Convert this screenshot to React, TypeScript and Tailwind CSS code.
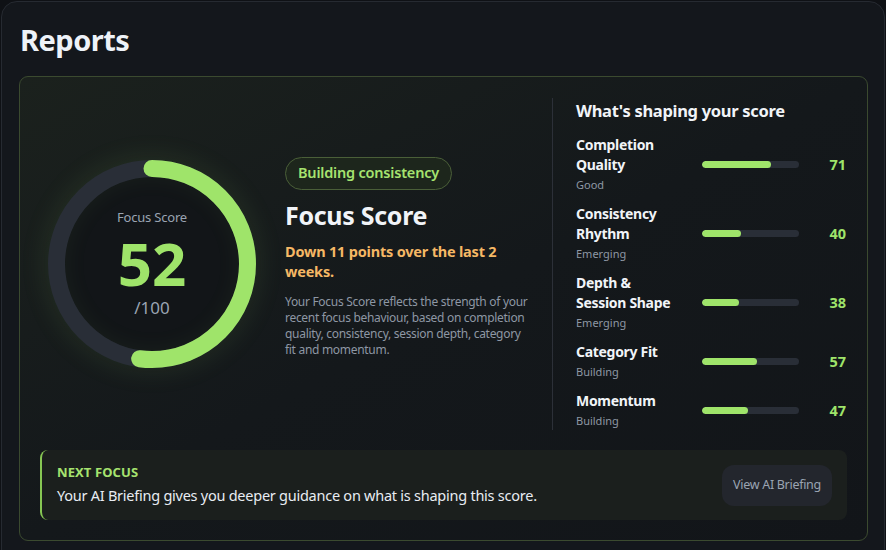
import React from "react";

const factors = [
  { name: "Completion Quality", sub: "Good", value: 71 },
  { name: "Consistency Rhythm", sub: "Emerging", value: 40 },
  { name: "Depth & Session Shape", sub: "Emerging", value: 38 },
  { name: "Category Fit", sub: "Building", value: 57 },
  { name: "Momentum", sub: "Building", value: 47 },
];

function Ring({ value }: { value: number }) {
  const size = 208;
  const stroke = 17;
  const r = (size - stroke) / 2;
  const c = 2 * Math.PI * r;
  const dash = (value / 100) * c;
  return (
    <div className="relative w-[208px] h-[208px]">
      <div className="absolute inset-[4px] rounded-full shadow-[0_0_28px_6px_rgba(159,228,106,0.10)]" />
      <div className="absolute inset-[17px] rounded-full bg-[#121518] shadow-[inset_0_0_24px_rgba(159,228,106,0.06)]" />
      <svg width={size} height={size} className="absolute inset-0 -rotate-90">
        <circle cx={size / 2} cy={size / 2} r={r} fill="none" stroke="#292e37" strokeWidth={stroke} />
        <circle
          cx={size / 2}
          cy={size / 2}
          r={r}
          fill="none"
          stroke="#9fe46a"
          strokeWidth={stroke}
          strokeLinecap="round"
          strokeDasharray={`${dash} ${c}`}
        />
      </svg>
      <div className="absolute inset-0 flex flex-col items-center justify-center pb-px">
        <div className="text-[13px] text-[#9aa4b2] leading-[16px] tracking-[-0.2px]">Focus Score</div>
        <div className="text-[60px] font-bold text-[#9fe46a] leading-[60px] mt-[8px]">52</div>
        <div className="text-[17px] text-[#9aa4b2] leading-[20px] mt-[5px]">/100</div>
      </div>
    </div>
  );
}

export default function App() {
  return (
    <div
      className="w-[886px] h-[550px] overflow-hidden bg-[#0f1115] pl-px pt-px"
      style={{ fontFamily: '"Noto Sans", "Open Sans", sans-serif' }}
    >
      <div className="w-[884px] h-[580px] rounded-[16px] border border-[#262a31] bg-[#14171c] px-[17px] pt-[18px]">
        <h1 className="text-[29px] font-bold text-[#eef2f8] leading-[40px] ml-[1px] tracking-[-0.5px]">Reports</h1>
        <div className="mt-[16px] w-[849px] rounded-[9px] border border-[#3b4a2f] bg-linear-to-br from-[#1b211d] via-[#14181b] to-[#121519] p-5">
          <div className="flex items-stretch pt-px">
            <div className="flex items-center gap-[21px]">
              <div className="w-[224px] flex justify-center">
                <Ring value={52} />
              </div>
              <div className="w-[250px] flex flex-col items-start pb-[14px]">
                <div className="rounded-full border border-[#4a5f38] bg-[#1d261c] px-[12px] h-[33px] flex items-center text-[14.5px] font-semibold text-[#a6e36f] tracking-[-0.2px]">
                  Building consistency
                </div>
                <div className="mt-[7px] text-[25px] font-bold text-[#f1f4f8] leading-[36px] tracking-[-0.3px]">Focus Score</div>
                <div className="mt-[8px] text-[14.5px] font-bold text-[#f5b865] leading-[20px] tracking-[-0.2px]">
                  Down 11 points over the last 2 weeks.
                </div>
                <p className="mt-[13px] w-[250px] text-[12px] text-[#8e97a4] leading-[16px] tracking-[-0.3px]">
                  Your Focus Score reflects the strength of your recent focus behaviour, based on completion quality, consistency, session depth, category
                  <br />
                  fit and momentum.
                </p>
              </div>
            </div>
            <div className="ml-[17px] border-l border-[#2c3038] pl-[23px] flex-1">
              <div className="text-[16.5px] font-bold text-[#f1f4f8] leading-[24px] mt-[1px] tracking-[-0.3px]">What's shaping your score</div>
              <div className="mt-[12px] flex flex-col gap-[10px]">
                {factors.map((f) => (
                  <div key={f.name} className="grid grid-cols-[110px_97px_1fr] items-center gap-x-[16px]">
                    <div className="max-w-[104px]">
                      <div className="text-[14px] font-bold text-[#f1f4f8] leading-[20px] tracking-[-0.3px]">{f.name}</div>
                      <div className="mt-px text-[11px] text-[#8e97a4] leading-[18px]">{f.sub}</div>
                    </div>
                    <div className="h-[7px] w-[97px] rounded-full bg-[#292e37] overflow-hidden">
                      <div className="h-full rounded-full bg-[#9fe46a]" style={{ width: `${f.value}%` }} />
                    </div>
                    <div className="text-right text-[14.5px] font-bold text-[#9fe46a] pr-[1px]">{f.value}</div>
                  </div>
                ))}
              </div>
            </div>
          </div>
          <div className="mt-[20px] flex items-center justify-between rounded-lg border-l-2 border-[#86c653] bg-[#1b1f1d] pl-[15px] pr-[15px] h-[70px]">
            <div className="pb-[2px]">
              <div className="text-[13px] font-bold text-[#a6e36f] leading-[18px] tracking-[0.1px]">NEXT FOCUS</div>
              <div className="mt-[4px] text-[14.5px] text-[#e8ecf2] leading-[20px] tracking-[-0.25px]">
                Your AI Briefing gives you deeper guidance on what is shaping this score.
              </div>
            </div>
            <button className="h-[41px] w-[110px] rounded-[12px] bg-[#23262d] text-[12.5px] text-[#9aa4b2] tracking-[-0.3px]">View AI Briefing</button>
          </div>
        </div>
      </div>
    </div>
  );
}
